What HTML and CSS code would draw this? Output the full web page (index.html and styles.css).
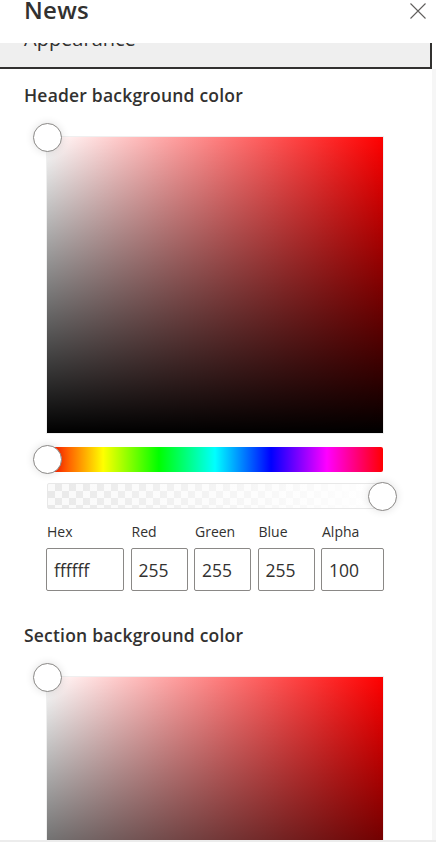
FILE: index.html
```html
<!DOCTYPE html>
<html lang="en">
<head>
<meta charset="utf-8">
<title>News</title>
<link rel="stylesheet" href="styles.css">
</head>
<body>
<div class="panel">
  <header class="panel-header">
    <h1 class="panel-title">News</h1>
    <button class="close-btn" aria-label="Close">
      <svg width="16" height="16" viewBox="0 0 16 16"><path d="M0.5 0.5L15.5 15.5M15.5 0.5L0.5 15.5" stroke="#605e5c" stroke-width="1.1" fill="none"/></svg>
    </button>
  </header>
  <div class="scroll">
    <div class="scroll-content">
      <div class="accordion"><span class="accordion-label">Appearance</span></div>

      <section class="section">
        <h2 class="section-title">Header background color</h2>
        <div class="picker">
          <div class="sv"><span class="thumb thumb-sv"></span></div>
          <div class="slider hue"><span class="thumb thumb-start"></span></div>
          <div class="slider alpha"><span class="thumb thumb-end"></span></div>
          <div class="fields">
            <div class="field field-hex"><span class="field-label">Hex</span><span class="field-input">ffffff</span></div>
            <div class="field field-num"><span class="field-label">Red</span><span class="field-input">255</span></div>
            <div class="field field-num"><span class="field-label">Green</span><span class="field-input">255</span></div>
            <div class="field field-num"><span class="field-label">Blue</span><span class="field-input">255</span></div>
            <div class="field field-alpha"><span class="field-label">Alpha</span><span class="field-input">100</span></div>
          </div>
        </div>
      </section>

      <section class="section section-second">
        <h2 class="section-title">Section background color</h2>
        <div class="picker">
          <div class="sv"><span class="thumb thumb-sv"></span></div>
        </div>
      </section>
    </div>
    <div class="scroll-track"></div>
  </div>
</div>
</body>
</html>
```
FILE: styles.css
```css
* { box-sizing: border-box; }
html, body { margin: 0; padding: 0; }
body {
  width: 436px;
  height: 842px;
  overflow: hidden;
  background: #fff;
  font-family: "Open Sans", "Noto Sans", sans-serif;
  color: #323130;
}
.panel {
  height: 842px;
  display: flex;
  flex-direction: column;
  border-bottom: 2px solid #ececec;
}
.panel-header {
  height: 43px;
  flex: none;
  display: flex;
  justify-content: space-between;
  align-items: flex-start;
  padding: 0 10px 0 24px;
}
.panel-title {
  margin: -2px 0 0;
  font-size: 24px;
  line-height: 24px;
  font-weight: 600;
  letter-spacing: 0.3px;
}
.close-btn {
  border: 0;
  background: none;
  padding: 0;
  margin-top: 3px;
  width: 16px;
  height: 16px;
  display: block;
}
.close-btn svg { display: block; }
.scroll {
  flex: 1;
  min-height: 0;
  display: flex;
  overflow: hidden;
}
.scroll-content {
  width: 432px;
  flex: none;
}
.scroll-track {
  flex: 1;
  margin-top: 26px;
  background: #f6f6f6;
}
.accordion {
  height: 26px;
  background: #efefef;
  border-right: 2px solid #323130;
  border-bottom: 2px solid #323130;
  overflow: hidden;
  padding-left: 24px;
}
.accordion-label {
  display: block;
  font-size: 20px;
  line-height: 28px;
  margin-top: -18px;
}
.section {
  padding-left: 24px;
  margin-top: 14px;
}
.section-second { margin-top: 32px; }
.section-title {
  margin: 0 0 30px;
  font-size: 17.5px;
  line-height: 24px;
  font-weight: 600;
  letter-spacing: 0.2px;
}
.picker {
  margin-left: 23px;
  width: 336px;
}
.sv {
  position: relative;
  height: 296px;
  background:
    linear-gradient(to top, #000, rgba(0, 0, 0, 0)),
    linear-gradient(to right, #fff, #f00);
  box-shadow: 0 0 0 1px #efefef;
}
.slider {
  position: relative;
  border-radius: 2px;
}
.hue {
  height: 25px;
  margin-top: 14px;
  background: linear-gradient(to right, #f00 0%, #ff0 16.7%, #0f0 33.3%, #0ff 50%, #00f 66.7%, #f0f 83.3%, #f00 100%);
}
.alpha {
  height: 26px;
  margin-top: 11px;
  border: 1px solid #e8e8e8;
  background:
    linear-gradient(to right, rgba(255, 255, 255, 0), #fff),
    conic-gradient(#e9e9e9 0 25%, #fafafa 0 50%, #e9e9e9 0 75%, #fafafa 0) 0 0 / 14px 14px;
}
.thumb {
  position: absolute;
  width: 29px;
  height: 29px;
  border-radius: 50%;
  background: #fff;
  border: 1px solid #8a8886;
  box-shadow: 0 0 8px rgba(0, 0, 0, 0.12);
}
.thumb-sv { left: -14.5px; top: -14.5px; }
.thumb-start { left: -14.5px; top: -2px; }
.thumb-end { right: -15px; top: -2px; }
.fields {
  display: flex;
  gap: 6.5px;
  margin-top: 13px;
  width: 340px;
  margin-left: -1px;
}
.field {
  display: flex;
  flex-direction: column;
  gap: 6px;
}
.field-hex { width: 78px; }
.field-num { width: 57px; }
.field-alpha { width: 63px; }
.field-label {
  font-size: 14px;
  line-height: 20px;
  padding-left: 1px;
}
.field-input {
  height: 43px;
  border: 1px solid #8a8886;
  border-radius: 2px;
  padding: 0 7px;
  font-size: 17.5px;
  display: flex;
  align-items: center;
}
```
